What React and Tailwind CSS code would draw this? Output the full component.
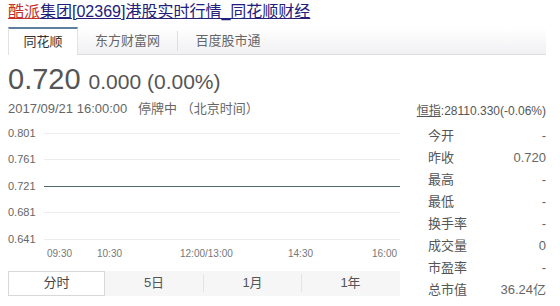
const FONT = { fontFamily: '"Liberation Sans", Arial, "Noto Sans CJK SC", sans-serif' };

const SOURCES = ['同花顺', '东方财富网', '百度股市通'];
const Y_TICKS = ['0.801', '0.761', '0.721', '0.681', '0.641'];
const X_TICKS = [
  { label: '09:30', w: 'w-[50px]' },
  { label: '10:30', w: 'w-[83px]' },
  { label: '12:00/13:00', w: 'w-[108px]' },
  { label: '14:30', w: 'w-[84px]' },
  { label: '16:00', w: 'w-[30px]' },
];
const PERIODS = ['分时', '5日', '1月', '1年'];
const STATS = [
  ['今开', '-'],
  ['昨收', '0.720'],
  ['最高', '-'],
  ['最低', '-'],
  ['换手率', '-'],
  ['成交量', '0'],
  ['市盈率', '-'],
  ['总市值', '36.24亿'],
];

function SourceTabs() {
  return (
    <div className="flex h-[28px] w-[538px] border-b border-[#dcdcdc] bg-gradient-to-b from-white to-[#f1f1f4]">
      {SOURCES.map((s, i) =>
        i === 0 ? (
          <div
            key={s}
            className="flex w-[70px] items-center justify-center border-t-2 border-l border-r border-t-[#5f7fa0] border-l-[#e2e2e2] border-r-[#e2e2e2] bg-white -mb-px text-[13px] text-[#333]"
          >
            {s}
          </div>
        ) : (
          <div key={s} className="flex w-[100px] items-center">
            <div className="flex-1 text-center text-[13px] text-[#666]">{s}</div>
            {i === 1 && <div className="h-[20px] w-px bg-[#dedede]" />}
          </div>
        )
      )}
    </div>
  );
}

function Chart() {
  return (
    <div className="w-[392px]">
      <div className="pt-[3px]">
        {Y_TICKS.map((t) => (
          <div key={t} className="flex h-[26.5px] items-center">
            <div className="w-[36px] text-[11px] leading-none text-[#666]">{t}</div>
            {t === '0.721' ? (
              <div className="h-[1.5px] flex-1 bg-[#50696a]" />
            ) : (
              <div className="h-px flex-1 bg-[#ececec]" />
            )}
          </div>
        ))}
      </div>
      <div className="-mt-[6px] flex h-[13px] items-center pl-[39px] text-[10px] text-[#777]">
        {X_TICKS.map((x) => (
          <div key={x.label} className={`${x.w} shrink-0`}>
            {x.label}
          </div>
        ))}
      </div>
      <div className="mt-[11px] flex h-[25px] bg-[#f6f6f7]">
        {PERIODS.map((p, i) => (
          <div key={p} className="flex items-center">
            {i >= 2 && <div className="h-[18px] w-px bg-[#e4e4e4]" />}
            {i === 0 ? (
              <div className="flex h-[25px] w-[97px] items-center justify-center border border-[#d8d8d8] bg-white text-[13px] text-[#444]">
                {p}
              </div>
            ) : (
              <div className={`flex h-[25px] ${i === 1 ? 'w-[98px]' : 'w-[97px]'} items-center justify-center text-[13px] text-[#555]`}>
                {p}
              </div>
            )}
          </div>
        ))}
      </div>
    </div>
  );
}

function Stats() {
  return (
    <div className="ml-[13px] w-[133px] pt-[8px] pl-[15px]">
      {STATS.map(([k, v]) => (
        <div key={k} className="flex h-[22px] items-center justify-between text-[13px]">
          <span className="text-[#555]">{k}</span>
          <span className="text-[#666]">{v}</span>
        </div>
      ))}
    </div>
  );
}

export default function App() {
  return (
    <div className="h-[306px] w-[560px] overflow-hidden bg-white px-2" style={FONT}>
      <div className="h-[27px] pt-[2px] text-[16px] leading-[20px]">
        <a className="text-[#c4302b] underline">酷派</a>
        <a className="text-[#22207a] underline">集团[02369]港股实时行情_同花顺财经</a>
      </div>
      <SourceTabs />
      <div className="mt-[10px] flex h-[29px] items-baseline leading-none text-[#555]">
        <span className="text-[29px]">0.720</span>
        <span className="ml-[8px] text-[21px]">0.000 (0.00%)</span>
      </div>
      <div className="mt-[7px] flex h-[16px] w-[538px] items-center justify-between">
        <span className="text-[13px] text-[#666]">
          2017/09/21 16:00:00&nbsp;&nbsp;&nbsp;停牌中 （北京时间）
        </span>
        <span className="mt-[3px] text-[12px] text-[#555]">
          <span className="underline">恒指</span>:28110.330(-0.06%)
        </span>
      </div>
      <div className="flex">
        <Chart />
        <Stats />
      </div>
    </div>
  );
}
